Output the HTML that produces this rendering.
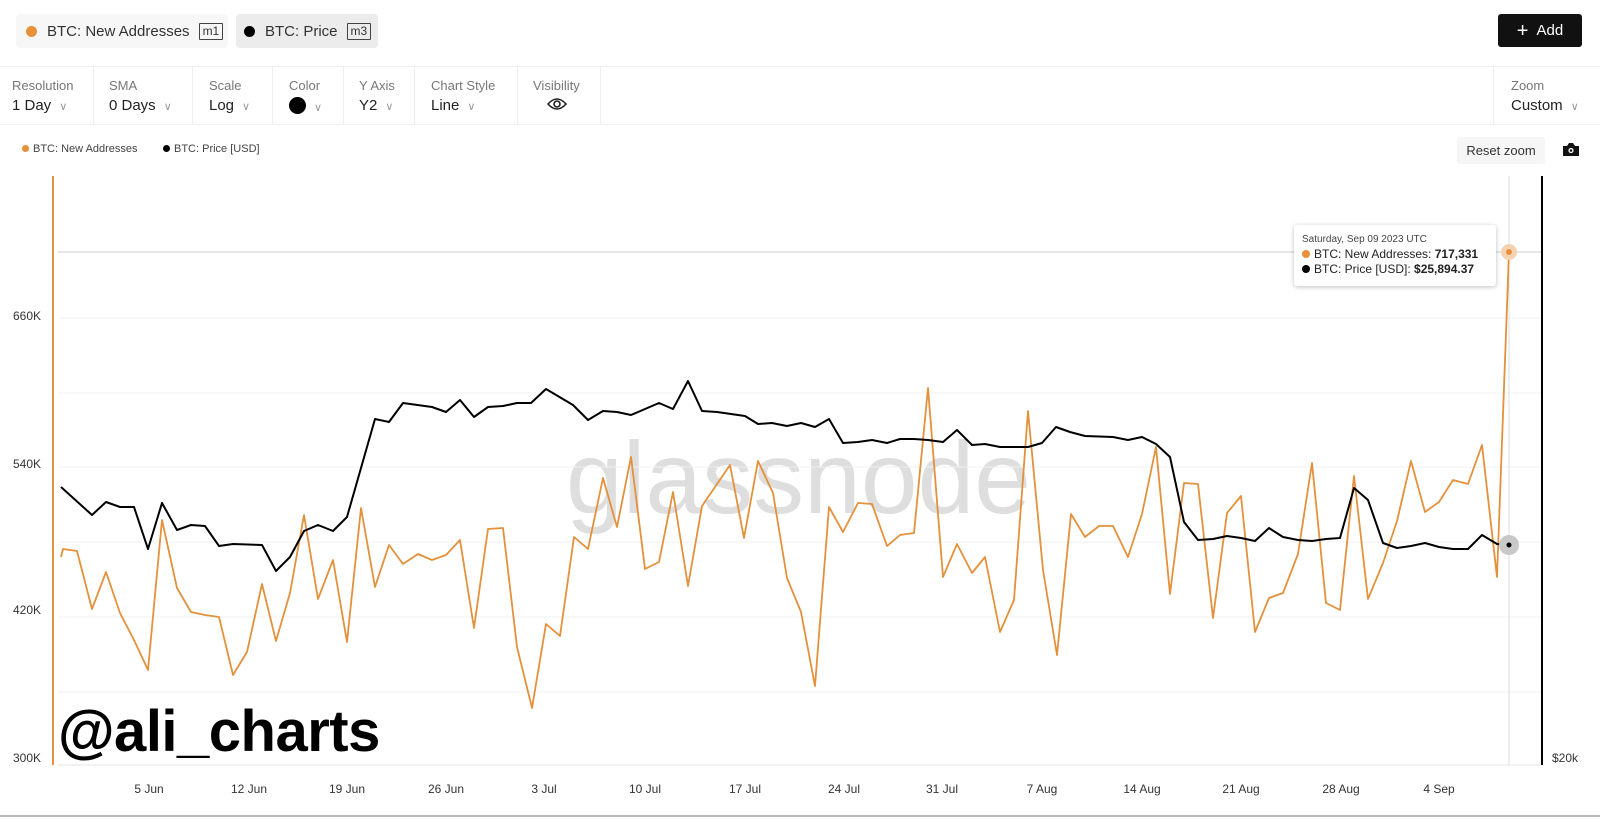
<!DOCTYPE html>
<html><head><meta charset="utf-8"><style>
*{margin:0;padding:0;box-sizing:border-box}
body{width:1600px;height:819px;background:#fff;font-family:"Liberation Sans",Arial,sans-serif;position:relative;overflow:hidden;color:#222}
.a{position:absolute;white-space:nowrap}
.pill{position:absolute;top:14px;height:34px;border-radius:4px;display:flex;align-items:center;font-size:15px;color:#333}
.tag{border:1px solid #444;font-size:12px;padding:0 3px;margin-left:9px;line-height:15px;border-radius:1px}
.dot{width:11px;height:11px;border-radius:50%;display:inline-block;margin-right:10px}
.lbl{position:absolute;top:78px;font-size:13px;color:#777}
.val{position:absolute;top:97px;font-size:15px;color:#222}
.chev{color:#999;font-size:11px;margin-left:8px}
.sep{position:absolute;top:66px;width:1px;height:58px;background:#eee}
.yl{position:absolute;left:13px;font-size:12px;color:#333}
.xl{position:absolute;top:782px;font-size:12px;color:#333;transform:translateX(-50%)}
</style></head><body>
<div class="pill" style="left:16px;width:212px;background:#f7f7f7;padding-left:10px"><span class="dot" style="background:#e8903a"></span>BTC: New Addresses<span class="tag">m1</span></div>
<div class="pill" style="left:236px;width:142px;background:#ececec;padding-left:8px"><span class="dot" style="background:#000"></span>BTC: Price<span class="tag">m3</span></div>
<div class="a" style="left:1498px;top:14px;width:84px;height:33px;background:#111;border-radius:3px;color:#fff;font-size:15px;display:flex;align-items:center;justify-content:center"><span style="font-size:20px;margin-right:8px;line-height:1">+</span>Add</div>
<div class="a" style="left:0;top:66px;width:1600px;height:1px;background:#f0f0f0"></div>
<div class="a" style="left:0;top:124px;width:1600px;height:1px;background:#f0f0f0"></div>
<div class="sep" style="left:93px"></div><div class="sep" style="left:192px"></div><div class="sep" style="left:272px"></div><div class="sep" style="left:343px"></div><div class="sep" style="left:414px"></div><div class="sep" style="left:517px"></div><div class="sep" style="left:600px"></div><div class="sep" style="left:1493px"></div>
<div class="lbl" style="left:12px">Resolution</div><div class="val" style="left:12px">1 Day<span class="chev">∨</span></div>
<div class="lbl" style="left:109px">SMA</div><div class="val" style="left:109px">0 Days<span class="chev">∨</span></div>
<div class="lbl" style="left:209px">Scale</div><div class="val" style="left:209px">Log<span class="chev">∨</span></div>
<div class="lbl" style="left:289px">Color</div><div class="val" style="left:289px"><span style="display:inline-block;width:17px;height:17px;border-radius:50%;background:#000;vertical-align:-3px"></span><span class="chev">∨</span></div>
<div class="lbl" style="left:359px">Y Axis</div><div class="val" style="left:359px">Y2<span class="chev">∨</span></div>
<div class="lbl" style="left:431px">Chart Style</div><div class="val" style="left:431px">Line<span class="chev">∨</span></div>
<div class="lbl" style="left:533px">Visibility</div>
<svg class="a" style="left:547px;top:96px" width="20" height="16" viewBox="0 0 20 16"><path d="M1 8Q10-2 19 8Q10 18 1 8Z" fill="none" stroke="#222" stroke-width="1.6"/><circle cx="10" cy="8" r="3" fill="none" stroke="#222" stroke-width="1.6"/></svg>
<div class="lbl" style="left:1511px">Zoom</div><div class="val" style="left:1511px">Custom<span class="chev">∨</span></div>
<div class="a" style="left:22px;top:143px;font-size:11px;color:#444"><span class="dot" style="background:#e8903a;width:7px;height:7px;margin-right:4px"></span>BTC: New Addresses</div>
<div class="a" style="left:163px;top:143px;font-size:11px;color:#444"><span class="dot" style="background:#000;width:7px;height:7px;margin-right:4px"></span>BTC: Price [USD]</div>
<div class="a" style="left:1457px;top:137px;width:88px;height:27px;background:#f6f6f6;border-radius:3px;font-size:13px;color:#333;display:flex;align-items:center;justify-content:center">Reset zoom</div>
<svg class="a" style="left:1562px;top:142px" width="18" height="15" viewBox="0 0 18 15"><path d="M1 4h4l2-3h4l2 3h4v10H1z" fill="#111"/><circle cx="9" cy="8.5" r="2.6" fill="#fff"/><circle cx="9" cy="8.5" r="1.3" fill="#111"/></svg>
<div class="a" style="left:566px;top:420px;font-size:102px;color:#dedede;letter-spacing:0px;font-family:'Liberation Sans',sans-serif">glassnode</div>
<svg class="a" style="left:0;top:0" width="1600" height="819">
<g stroke="#f0f0f0" stroke-width="1"><line x1="58" y1="318" x2="1542" y2="318"/><line x1="58" y1="393" x2="1542" y2="393"/><line x1="58" y1="467" x2="1542" y2="467"/><line x1="58" y1="542" x2="1542" y2="542"/><line x1="58" y1="617" x2="1542" y2="617"/><line x1="58" y1="692" x2="1542" y2="692"/></g>
<line x1="58" y1="765" x2="1542" y2="765" stroke="#e6e6e6"/>
<line x1="58" y1="252" x2="1542" y2="252" stroke="#ccc"/>
<line x1="1509" y1="176" x2="1509" y2="765" stroke="#ddd"/>
<line x1="53" y1="176" x2="53" y2="765" stroke="#e8903a" stroke-width="2"/>
<line x1="1542" y1="176" x2="1542" y2="765" stroke="#000" stroke-width="2"/>
<line x1="0" y1="816" x2="1600" y2="816" stroke="#bbb" stroke-width="2"/>
<polyline fill="none" stroke="#e3913c" stroke-width="1.8" stroke-linejoin="round" points="61,557 63,549 77,551 92,609 106,572 120,613 134,640 148,670 162,520 177,588 191,612 205,615 219,617 233,675 247,652 262,584 276,641 290,593 304,515 318,599 333,560 347,642 361,508 375,587 389,545 403,564 418,554 432,560 446,555 460,540 474,628 488,529 503,528 517,647 532,708 546,624 560,636 574,537 588,549 603,478 617,527 631,457 645,569 659,562 673,492 688,586 702,506 730,465 744,538 758,461 773,493 787,578 801,612 815,686 829,507 843,532 858,503 872,504 887,546 900,535 914,533 928,388 943,577 957,544 972,573 985,557 1000,632 1014,600 1028,411 1043,570 1057,655 1071,514 1085,537 1099,526 1113,526 1128,557 1142,514 1156,447 1170,594 1184,483 1198,484 1213,618 1227,513 1241,496 1255,632 1269,598 1283,593 1298,554 1312,463 1326,603 1340,610 1354,476 1368,599 1383,563 1397,521 1411,461 1425,512 1439,502 1453,480 1468,484 1482,445 1497,577 1509,252"/>
<polyline fill="none" stroke="#000" stroke-width="2" stroke-linejoin="round" points="61,487 92,515 106,502 120,507 134,507 148,549 162,503 177,530 191,525 205,526 219,546 233,544 262,545 276,571 290,557 304,531 318,525 333,531 347,517 375,419 389,422 403,403 432,407 446,412 460,400 474,417 488,407 503,406 517,403 531,403 546,389 573,405 588,420 603,411 617,412 631,415 659,403 673,409 688,381 702,411 717,412 745,416 758,424 772,423 787,426 801,423 815,427 829,419 843,443 858,442 872,440 887,443 900,439 914,439 928,440 943,442 957,430 972,445 985,444 1000,447 1028,447 1042,443 1056,427 1070,432 1085,436 1113,437 1128,440 1142,437 1156,444 1170,457 1184,522 1198,540 1213,539 1227,536 1241,538 1255,541 1269,528 1283,537 1298,540 1312,541 1326,539 1340,538 1354,488 1368,500 1383,543 1397,548 1411,546 1425,543 1439,547 1453,549 1468,549 1482,535 1497,544 1509,545"/>
<circle cx="1509" cy="252" r="8" fill="#f6d3b0"/><circle cx="1509" cy="252" r="3" fill="#e3913c"/>
<circle cx="1509" cy="545" r="10" fill="#c8c8c8"/><circle cx="1509" cy="545" r="2.5" fill="#000"/>
</svg>
<div class="a" style="left:1294px;top:225px;width:202px;height:61px;background:#fff;border-radius:3px;box-shadow:0 1px 5px rgba(0,0,0,.25);padding:7px 8px;font-size:12px;color:#222;line-height:15px">
<div style="font-size:10px;color:#444">Saturday, Sep 09 2023 UTC</div>
<div><span class="dot" style="background:#e8903a;width:8px;height:8px;margin-right:4px"></span>BTC: New Addresses: <b>717,331</b></div>
<div><span class="dot" style="background:#000;width:8px;height:8px;margin-right:4px"></span>BTC: Price [USD]: <b>$25,894.37</b></div>
</div>
<div class="yl" style="top:309px">660K</div><div class="yl" style="top:457px">540K</div><div class="yl" style="top:603px">420K</div><div class="yl" style="top:751px">300K</div>
<div class="a" style="left:1552px;top:751px;font-size:12px;color:#333">$20k</div>
<div class="a" style="left:58px;top:698px;font-size:58px;font-weight:bold;color:#000;letter-spacing:-0.5px">@ali_charts</div>
<div class="xl" style="left:149px">5 Jun</div><div class="xl" style="left:249px">12 Jun</div><div class="xl" style="left:347px">19 Jun</div><div class="xl" style="left:446px">26 Jun</div><div class="xl" style="left:544px">3 Jul</div><div class="xl" style="left:645px">10 Jul</div><div class="xl" style="left:745px">17 Jul</div><div class="xl" style="left:844px">24 Jul</div><div class="xl" style="left:942px">31 Jul</div><div class="xl" style="left:1042px">7 Aug</div><div class="xl" style="left:1142px">14 Aug</div><div class="xl" style="left:1241px">21 Aug</div><div class="xl" style="left:1341px">28 Aug</div><div class="xl" style="left:1439px">4 Sep</div>
</body></html>
